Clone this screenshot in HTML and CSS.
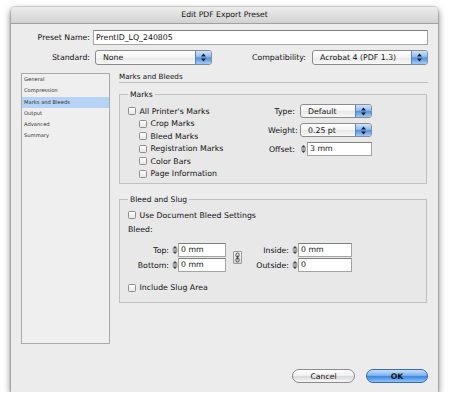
FILE: index.html
```html
<!DOCTYPE html>
<html lang="en">
<head>
    <meta charset="UTF-8">
    <title>Edit PDF Export Preset</title>
    <link rel="stylesheet" href="styles.css">
</head>
<body>
    <div class="window">
        <div class="titlebar">Edit PDF Export Preset</div>
        <div class="dialog">
            <div class="row">
                <label class="lbl">Preset Name:</label>
                <div class="field field-name">PrentID_LQ_240805</div>
            </div>
            <div class="row row-std">
                <label class="lbl">Standard:</label>
                <div class="popup popup-std">
                    <span>None</span>
                    <i class="arrows"><svg width="5" height="9" viewBox="0 0 5 9"><polygon points="0,3.5 2.5,0.5 5,3.5"/><polygon points="0,5.5 2.5,8.5 5,5.5"/></svg></i>
                </div>
                <label class="lbl lbl-compat">Compatibility:</label>
                <div class="popup popup-compat">
                    <span>Acrobat 4 (PDF 1.3)</span>
                    <i class="arrows"><svg width="5" height="9" viewBox="0 0 5 9"><polygon points="0,3.5 2.5,0.5 5,3.5"/><polygon points="0,5.5 2.5,8.5 5,5.5"/></svg></i>
                </div>
            </div>

            <div class="body">
                <ul class="sidebar">
                    <li>General</li>
                    <li>Compression</li>
                    <li class="sel">Marks and Bleeds</li>
                    <li>Output</li>
                    <li>Advanced</li>
                    <li>Summary</li>
                </ul>

                <div class="panel">
                    <div class="panel-title">Marks and Bleeds</div>

                    <fieldset class="group">
                        <legend>Marks</legend>
                        <div class="marks-body">
                            <div class="checks">
                                <div class="check"><span class="box"></span>All Printer's Marks</div>
                                <div class="check sub"><span class="box"></span>Crop Marks</div>
                                <div class="check sub"><span class="box"></span>Bleed Marks</div>
                                <div class="check sub"><span class="box"></span>Registration Marks</div>
                                <div class="check sub"><span class="box"></span>Color Bars</div>
                                <div class="check sub"><span class="box"></span>Page Information</div>
                            </div>
                            <div class="opts">
                                <label class="opt-lbl">Type:</label>
                                <div class="popup popup-sm">
                                    <span>Default</span>
                                    <i class="arrows"><svg width="5" height="9" viewBox="0 0 5 9"><polygon points="0,3.5 2.5,0.5 5,3.5"/><polygon points="0,5.5 2.5,8.5 5,5.5"/></svg></i>
                                </div>
                                <label class="opt-lbl">Weight:</label>
                                <div class="popup popup-sm">
                                    <span>0.25 pt</span>
                                    <i class="arrows"><svg width="5" height="9" viewBox="0 0 5 9"><polygon points="0,3.5 2.5,0.5 5,3.5"/><polygon points="0,5.5 2.5,8.5 5,5.5"/></svg></i>
                                </div>
                                <label class="opt-lbl">Offset:</label>
                                <div class="ctrl">
                                    <svg class="spin" width="7" height="10" viewBox="0 0 7 10"><polygon points="1,3.5 3.5,1 6,3.5"/><rect x="1" y="4.6" width="5" height="0.8"/><polygon points="1,6.5 3.5,9 6,6.5"/></svg>
                                    <div class="field">3 mm</div>
                                </div>
                            </div>
                        </div>
                    </fieldset>

                    <fieldset class="group group-bleed">
                        <legend>Bleed and Slug</legend>
                        <div class="bleed-body">
                            <div class="check"><span class="box"></span>Use Document Bleed Settings</div>
                            <div class="bleed-lbl">Bleed:</div>
                            <div class="bleed-grid">
                                <label class="grid-lbl">Top:</label>
                                <div class="ctrl">
                                    <svg class="spin" width="6" height="10" viewBox="0 0 6 10"><polygon points="0.5,3.5 3,1 5.5,3.5"/><rect x="0.5" y="4.6" width="5" height="0.8"/><polygon points="0.5,6.5 3,9 5.5,6.5"/></svg>
                                    <div class="field">0 mm</div>
                                </div>
                                <div class="chain">
                                    <svg width="7" height="11" viewBox="0 0 7 11"><rect x="2" y="1" width="3" height="4" rx="1.2" fill="none" stroke="#333" stroke-width="0.9"/><rect x="2" y="6" width="3" height="4" rx="1.2" fill="none" stroke="#333" stroke-width="0.9"/><rect x="3.1" y="3.5" width="0.8" height="4" fill="#333"/></svg>
                                </div>
                                <label class="grid-lbl">Inside:</label>
                                <div class="ctrl">
                                    <svg class="spin" width="6" height="10" viewBox="0 0 6 10"><polygon points="0.5,3.5 3,1 5.5,3.5"/><rect x="0.5" y="4.6" width="5" height="0.8"/><polygon points="0.5,6.5 3,9 5.5,6.5"/></svg>
                                    <div class="field">0 mm</div>
                                </div>

                                <label class="grid-lbl">Bottom:</label>
                                <div class="ctrl">
                                    <svg class="spin" width="6" height="10" viewBox="0 0 6 10"><polygon points="0.5,3.5 3,1 5.5,3.5"/><rect x="0.5" y="4.6" width="5" height="0.8"/><polygon points="0.5,6.5 3,9 5.5,6.5"/></svg>
                                    <div class="field">0 mm</div>
                                </div>
                                <label class="grid-lbl">Outside:</label>
                                <div class="ctrl">
                                    <svg class="spin" width="6" height="10" viewBox="0 0 6 10"><polygon points="0.5,3.5 3,1 5.5,3.5"/><rect x="0.5" y="4.6" width="5" height="0.8"/><polygon points="0.5,6.5 3,9 5.5,6.5"/></svg>
                                    <div class="field">0</div>
                                </div>
                            </div>
                            <div class="check check-slug"><span class="box"></span>Include Slug Area</div>
                        </div>
                    </fieldset>
                </div>
            </div>

            <div class="buttons">
                <button class="btn">Cancel</button>
                <button class="btn btn-ok">OK</button>
            </div>
        </div>
    </div>
</body>
</html>
```

FILE: styles.css
```css
body {
    margin: 0;
    background: #fff;
    font-family: "DejaVu Sans", sans-serif;
    font-size: 7.8px;
    color: #111;
}

.window {
    margin: 7px 0 0 11px;
    width: 427px;
    height: 385px;
    background: #ececec;
    border-radius: 4px 4px 0 0;
    box-shadow: 0 3px 7px rgba(0, 0, 0, 0.6), 0 0 0 1px rgba(0, 0, 0, 0.12);
}

.titlebar {
    height: 17px;
    line-height: 16px;
    text-align: center;
    font-size: 7.7px;
    background: linear-gradient(#ececec, #d2d2d2);
    border-bottom: 1px solid #a0a0a0;
    border-radius: 4px 4px 0 0;
    box-sizing: border-box;
}

.dialog {
    padding: 6px 10px 0 0;
}

.row {
    display: flex;
    align-items: center;
    height: 15px;
}

.row-std {
    margin-top: 5px;
}

.lbl {
    width: 79px;
    flex: none;
    text-align: right;
}

.lbl-compat {
    width: auto;
    margin-left: auto;
}

.field {
    box-sizing: border-box;
    height: 14px;
    line-height: 12px;
    padding-left: 2px;
    background: #fff;
    border: 1px solid #a4a4a4;
    border-top-color: #7e7e7e;
}

.field-name {
    flex: 1;
    height: 15px;
    line-height: 13px;
    margin-left: 3px;
}

/* popup menus */
.popup {
    display: flex;
    align-items: center;
    box-sizing: border-box;
    height: 15px;
    padding-left: 7px;
    border: 1px solid #8c8c8c;
    border-radius: 3px;
    background: linear-gradient(#fff, #f4f4f4 50%, #e8e8e8 51%, #f8f8f8);
}

.popup span {
    flex: 1;
}

.popup-std {
    width: 117px;
    margin-left: 5px;
}

.popup-compat {
    width: 116px;
    margin-left: 6px;
}

.popup-sm {
    height: 14px;
}

.arrows {
    align-self: stretch;
    width: 15px;
    display: flex;
    align-items: center;
    justify-content: center;
    border-left: 1px solid #5d86c0;
    border-radius: 0 2px 2px 0;
    background: linear-gradient(#cfe3fa, #8ebdf2 45%, #4f90e4 52%, #9ecbf7);
}

.arrows svg {
    fill: #1b1b1b;
}

/* body: sidebar and panel */
.body {
    display: flex;
    margin-top: 8px;
}

.sidebar {
    list-style: none;
    margin: 0 0 0 10px;
    padding: 0;
    width: 89px;
    height: 271px;
    box-sizing: border-box;
    border: 1px solid #a9a9a9;
    background: #efefef;
    font-size: 5.2px;
    color: #333;
}

.sidebar li {
    height: 11.3px;
    line-height: 11.3px;
    padding-left: 2px;
}

.sidebar .sel {
    background: #b6d2f5;
}

.panel {
    width: 310px;
    margin-left: 8px;
}

.panel-title {
    margin-left: 1px;
    padding-bottom: 2px;
    line-height: 7px;
    font-size: 7.2px;
    border-bottom: 1px solid #bdbdbd;
}

.group {
    margin: 7px 1px 0 1px;
    padding: 0 0 0 8px;
    min-width: 0;
    border: 1px solid #c0c0c0;
    background: #e8e8e8;
}

.group legend {
    padding: 0 2px;
    line-height: 9px;
    font-size: 7.6px;
}

.group-bleed {
    margin-top: 11px;
}

.marks-body {
    display: flex;
    padding-bottom: 3px;
}

.checks {
    width: 140px;
    padding-top: 6px;
}

.check {
    display: flex;
    align-items: center;
    height: 12.5px;
}

.check.sub {
    padding-left: 11px;
}

.box {
    width: 8px;
    height: 8px;
    box-sizing: border-box;
    margin-right: 3.5px;
    border: 1px solid #8e8e8e;
    border-radius: 1.5px;
    background: linear-gradient(#fff, #e6e6e6);
}

.opts {
    display: grid;
    grid-template-columns: 27px 72px;
    grid-auto-rows: 14px;
    column-gap: 5px;
    row-gap: 5px;
    align-items: center;
    padding-top: 5px;
}

.opt-lbl,
.grid-lbl {
    text-align: right;
}

.ctrl {
    display: flex;
    align-items: center;
}

.ctrl .field {
    flex: 1;
}

.spin {
    flex: none;
    fill: #444;
}

.bleed-body {
    padding: 5px 0 8px 0;
}

.bleed-body .check {
    height: 12px;
}

.bleed-lbl {
    margin-top: 3px;
    height: 12px;
    line-height: 12px;
}

.bleed-grid {
    display: grid;
    grid-template-columns: 44px 54px 16px 50px 60px;
    grid-auto-rows: 14px;
    row-gap: 1px;
    align-items: center;
    margin-top: 7px;
}

.grid-lbl {
    padding-right: 3px;
}

.chain {
    grid-row: span 2;
    justify-self: end;
    width: 9px;
    height: 13px;
    box-sizing: border-box;
    display: flex;
    align-items: center;
    justify-content: center;
    border: 1px solid #9a9a9a;
    border-radius: 1px;
    background: linear-gradient(#fafafa, #dcdcdc);
}

.bleed-body .check-slug {
    margin-top: 9.5px;
}

/* bottom buttons */
.buttons {
    display: flex;
    justify-content: flex-end;
    gap: 11px;
    margin-top: 25px;
}

.btn {
    width: 63px;
    height: 14px;
    padding: 0;
    font-family: "DejaVu Sans", sans-serif;
    font-size: 7.7px;
    color: #111;
    border: 1px solid #8a8a8a;
    border-radius: 7px;
    background: linear-gradient(#ffffff, #f1f1f1 45%, #dadada 55%, #f6f6f6);
}

.btn-ok {
    width: 62px;
    font-weight: bold;
    border-color: #3a69ad;
    background: linear-gradient(#c7e0fb, #7fb4f0 45%, #3e86e0 55%, #8fc5fa);
}
```
